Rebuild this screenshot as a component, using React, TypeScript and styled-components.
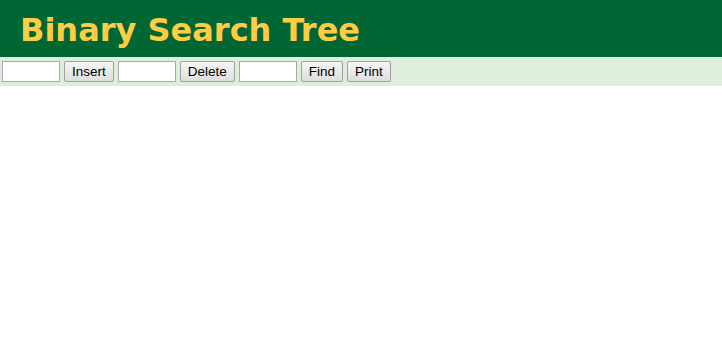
import React from "react";
import styled, { createGlobalStyle } from "styled-components";

const GlobalStyle = createGlobalStyle`
  html, body {
    margin: 0;
    padding: 0;
    background: #ffffff;
  }
`;

const Header = styled.header`
  background: #006633;
  height: 57px;
  display: flex;
  align-items: center;
  padding: 2px 0 0 20px;
  box-sizing: border-box;
`;

const Title = styled.h1`
  margin: 0;
  font-family: "DejaVu Sans", Verdana, sans-serif;
  font-weight: bold;
  font-size: 32px;
  color: #ffcc44;
  line-height: 1;
`;

const Toolbar = styled.div`
  background: #ddeedd;
  height: 29px;
  display: flex;
  align-items: center;
  padding-left: 2px;
  gap: 4px;
  box-sizing: border-box;
`;

const Field = styled.input`
  width: 58px;
  height: 21px;
  box-sizing: border-box;
  border: 1px solid #a9a9a9;
  background: #ffffff;
  padding: 0 3px;
  font-family: "Liberation Sans", Arial, sans-serif;
  font-size: 13px;
  outline: none;
`;

const Button = styled.button`
  height: 21px;
  box-sizing: border-box;
  border: 1px solid #a0a0a0;
  border-radius: 2px;
  background: linear-gradient(#f6f6f6, #dedede);
  padding: 0 7px;
  font-family: "Liberation Sans", Arial, sans-serif;
  font-size: 13.5px;
  color: #000000;
  cursor: pointer;
`;

const Canvas = styled.div`
  height: 274px;
  background: #ffffff;
`;

export default function App() {
  return (
    <>
      <GlobalStyle />
      <Header>
        <Title>Binary Search Tree</Title>
      </Header>
      <Toolbar>
        <Field />
        <Button>Insert</Button>
        <Field />
        <Button>Delete</Button>
        <Field />
        <Button>Find</Button>
        <Button>Print</Button>
      </Toolbar>
      <Canvas />
    </>
  );
}
